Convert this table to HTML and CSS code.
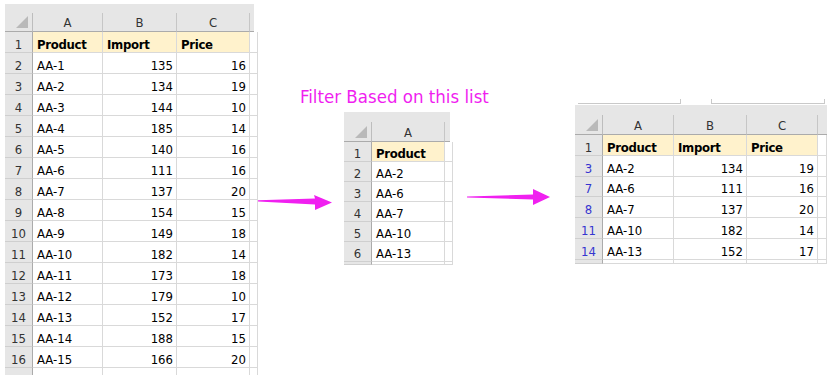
FILE: index.html
```html
<!DOCTYPE html>
<html>
<head>
<meta charset="utf-8">
<link rel="stylesheet" href="styles.css">
</head>
<body>
<div class="page">
  <div class="sheet sheet-left">
    <div class="topband"></div>
    <div class="grid grid-left">
      <div class="corner"><span class="tri"></span></div><div class="ch">A</div><div class="ch">B</div><div class="ch">C</div><div class="ch stub"></div>
      <div class="rh">1</div><div class="c hd">Product</div><div class="c hd">Import</div><div class="c hd">Price</div><div class="c"></div>
      <div class="rh">2</div><div class="c">AA-1</div><div class="c n">135</div><div class="c n">16</div><div class="c"></div>
      <div class="rh">3</div><div class="c">AA-2</div><div class="c n">134</div><div class="c n">19</div><div class="c"></div>
      <div class="rh">4</div><div class="c">AA-3</div><div class="c n">144</div><div class="c n">10</div><div class="c"></div>
      <div class="rh">5</div><div class="c">AA-4</div><div class="c n">185</div><div class="c n">14</div><div class="c"></div>
      <div class="rh">6</div><div class="c">AA-5</div><div class="c n">140</div><div class="c n">16</div><div class="c"></div>
      <div class="rh">7</div><div class="c">AA-6</div><div class="c n">111</div><div class="c n">16</div><div class="c"></div>
      <div class="rh">8</div><div class="c">AA-7</div><div class="c n">137</div><div class="c n">20</div><div class="c"></div>
      <div class="rh">9</div><div class="c">AA-8</div><div class="c n">154</div><div class="c n">15</div><div class="c"></div>
      <div class="rh">10</div><div class="c">AA-9</div><div class="c n">149</div><div class="c n">18</div><div class="c"></div>
      <div class="rh">11</div><div class="c">AA-10</div><div class="c n">182</div><div class="c n">14</div><div class="c"></div>
      <div class="rh">12</div><div class="c">AA-11</div><div class="c n">173</div><div class="c n">18</div><div class="c"></div>
      <div class="rh">13</div><div class="c">AA-12</div><div class="c n">179</div><div class="c n">10</div><div class="c"></div>
      <div class="rh">14</div><div class="c">AA-13</div><div class="c n">152</div><div class="c n">17</div><div class="c"></div>
      <div class="rh">15</div><div class="c">AA-14</div><div class="c n">188</div><div class="c n">15</div><div class="c"></div>
      <div class="rh">16</div><div class="c">AA-15</div><div class="c n">166</div><div class="c n">20</div><div class="c"></div>
      <div class="rh"></div><div class="c"></div><div class="c"></div><div class="c"></div><div class="c"></div>
    </div>
  </div>

  <div class="mid-group">
    <div class="title">Filter Based on this list</div>
    <div class="mid-row">
      <svg class="arrow arrow1" width="75" height="18" viewBox="0 0 75 18">
        <polygon points="0,7.3 57,5.5 56,2 74,9.5 57,17 57,11.5 0,8.4" fill="#f020f0"/>
      </svg>
      <div class="sheet sheet-mid">
        <div class="topband"></div>
        <div class="grid grid-mid">
          <div class="corner"><span class="tri"></span></div><div class="ch">A</div><div class="ch stub"></div>
          <div class="rh">1</div><div class="c hd">Product</div><div class="c"></div>
          <div class="rh">2</div><div class="c">AA-2</div><div class="c"></div>
          <div class="rh">3</div><div class="c">AA-6</div><div class="c"></div>
          <div class="rh">4</div><div class="c">AA-7</div><div class="c"></div>
          <div class="rh">5</div><div class="c">AA-10</div><div class="c"></div>
          <div class="rh">6</div><div class="c">AA-13</div><div class="c"></div>
          <div class="rh"></div><div class="c"></div><div class="c"></div>
        </div>
      </div>
    </div>
  </div>

  <div class="right-group">
    <svg class="arrow arrow2" width="84" height="18" viewBox="0 0 84 18">
      <polygon points="0,7.4 66,5.5 66,0 83,8 66,16 66,10.5 0,8.5" fill="#f020f0"/>
    </svg>
    <div class="sheet sheet-right">
      <div class="fbar">
        <span class="fb fb1"></span><span class="fb fb2"></span>
      </div>
      <div class="topband"></div>
      <div class="grid grid-right">
        <div class="corner"><span class="tri"></span></div><div class="ch">A</div><div class="ch">B</div><div class="ch">C</div><div class="ch stub"></div>
        <div class="rh">1</div><div class="c hd">Product</div><div class="c hd">Import</div><div class="c hd">Price</div><div class="c"></div>
        <div class="rh f">3</div><div class="c">AA-2</div><div class="c n">134</div><div class="c n">19</div><div class="c"></div>
        <div class="rh f">7</div><div class="c">AA-6</div><div class="c n">111</div><div class="c n">16</div><div class="c"></div>
        <div class="rh f">8</div><div class="c">AA-7</div><div class="c n">137</div><div class="c n">20</div><div class="c"></div>
        <div class="rh f">11</div><div class="c">AA-10</div><div class="c n">182</div><div class="c n">14</div><div class="c"></div>
        <div class="rh f">14</div><div class="c">AA-13</div><div class="c n">152</div><div class="c n">17</div><div class="c"></div>
        <div class="rh"></div><div class="c"></div><div class="c"></div><div class="c"></div><div class="c"></div>
      </div>
    </div>
  </div>
</div>
</body>
</html>
```

FILE: styles.css
```css
html, body {
  margin: 0;
  padding: 0;
  background: #ffffff;
}

.page {
  display: flex;
  align-items: flex-start;
  width: 839px;
  height: 375px;
  overflow: hidden;
  font-family: "DejaVu Sans Condensed", "DejaVu Sans", sans-serif;
  font-stretch: condensed;
  font-size: 13px;
  color: #000;
}

.sheet {
  display: flex;
  flex-direction: column;
  flex: none;
}

.topband {
  background: #e6e6e6;
  height: 9px;
}

.grid {
  display: grid;
}

.grid-left {
  grid-template-columns: 28px 70px 74px 73px 4px;
  grid-template-rows: 19px repeat(17, 21px);
}

.grid-mid {
  grid-template-columns: 28px 73px 5px;
  grid-template-rows: 20px repeat(6, 20px) 3px;
}

.grid-right {
  grid-template-columns: 28px 71px 73px 71px 9px;
  grid-template-rows: 20px repeat(6, 20.8px) 4px;
}

.grid > div {
  box-sizing: border-box;
  overflow: visible;
  white-space: nowrap;
}

.corner {
  background: #e6e6e6;
  border-right: 1px solid #bdbdbd;
  border-bottom: 1px solid #ababab;
  position: relative;
}

.tri {
  position: absolute;
  right: 4px;
  bottom: 3px;
  width: 0;
  height: 0;
  border-left: 12px solid transparent;
  border-bottom: 12px solid #b9b9b9;
}

.ch {
  background: #e6e6e6;
  border-right: 1px solid #c6c6c6;
  border-bottom: 1px solid #ababab;
  display: flex;
  align-items: center;
  justify-content: center;
  color: #333;
  padding-top: 1px;
}

.ch.stub {
  border-right: none;
}

.rh {
  background: #e6e6e6;
  border-right: 1px solid #ababab;
  border-bottom: 1px solid #cfcfcf;
  display: flex;
  align-items: flex-end;
  justify-content: center;
  line-height: 15px;
  color: #333;
}

.rh.f {
  color: #3535d0;
}

.c {
  border-right: 1px solid #d9d9d9;
  border-bottom: 1px solid #d9d9d9;
  display: flex;
  align-items: flex-end;
  line-height: 15px;
  padding: 0 3px 0 4px;
}

.c.hd {
  background: #fff2cc;
  font-weight: bold;
  letter-spacing: -0.3px;
}

.c.n {
  justify-content: flex-end;
}

/* left sheet */
.sheet-left {
  margin: 4px 0 0 5px;
}

/* middle group */
.mid-group {
  display: flex;
  flex-direction: column;
  flex: none;
  width: 192px;
  margin: 86px 0 0 4px;
}

.title {
  margin-left: 42px;
  height: 22px;
  line-height: 22px;
  font-size: 18.5px;
  white-space: nowrap;
  color: #f01ef0;
  margin-bottom: 4px;
}

.mid-row {
  display: flex;
  align-items: flex-start;
}

.arrow {
  flex: none;
  display: block;
}

.arrow1 {
  margin-top: 81px;
  margin-right: 11px;
}

.sheet-mid .topband {
  height: 10px;
}

/* right group */
.right-group {
  display: flex;
  align-items: flex-start;
  flex: none;
  margin: 99px 0 0 17px;
}

.arrow2 {
  margin-top: 90px;
  margin-right: 24px;
}

.fbar {
  height: 6px;
  position: relative;
}

.fb {
  position: absolute;
  bottom: 1px;
  height: 4px;
  border-bottom: 1px solid #c9c9c9;
}

.fb1 {
  left: 3px;
  width: 102px;
  border-right: 1px solid #c9c9c9;
}

.fb2 {
  left: 136px;
  width: 112px;
  border-left: 1px solid #c9c9c9;
  border-right: 1px solid #c9c9c9;
}

.sheet-right .topband {
  height: 10px;
}
```
